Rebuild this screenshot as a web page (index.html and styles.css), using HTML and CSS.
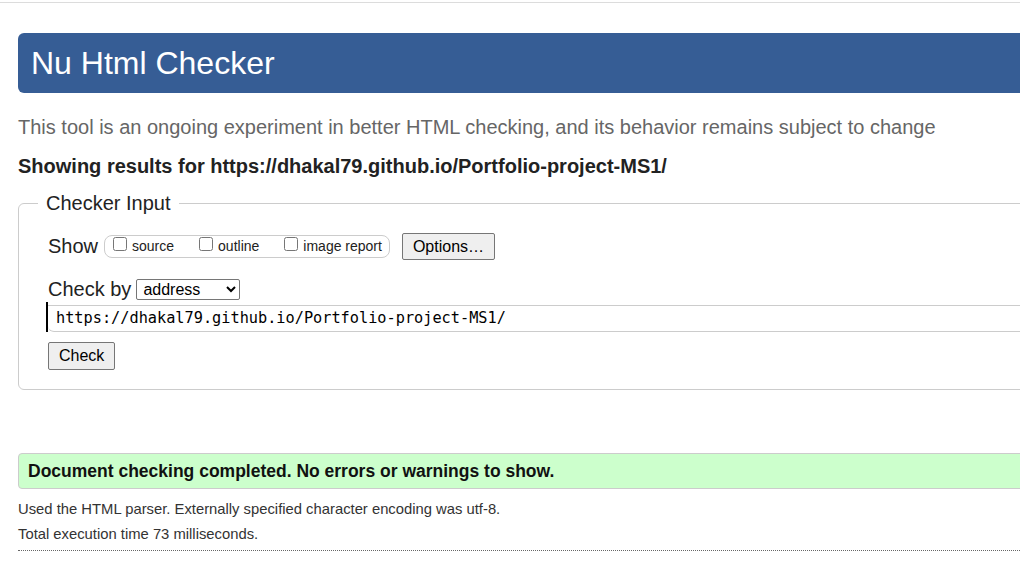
FILE: index.html
```html
<!DOCTYPE html>
<html lang="en">
<head>
<meta charset="utf-8">
<title>Nu Html Checker</title>
<link rel="stylesheet" href="styles.css">
</head>
<body>
<div class="topline"></div>
<main class="page">
  <h1 class="title">Nu Html Checker</h1>
  <p class="subtitle">This tool is an ongoing experiment in better HTML checking, and its behavior remains subject to change</p>
  <p class="results-for">Showing results for https://dhakal79.github.io/Portfolio-project-MS1/</p>
  <fieldset class="checker">
    <legend class="legend">Checker Input</legend>
    <div class="row show-row">
      <span class="row-label">Show</span>
      <span class="opts">
        <label class="opt"><input type="checkbox" class="cb"><span>source</span></label>
        <label class="opt"><input type="checkbox" class="cb"><span>outline</span></label>
        <label class="opt"><input type="checkbox" class="cb"><span>image report</span></label>
      </span>
      <button class="btn options-btn" type="button">Options…</button>
    </div>
    <div class="row checkby-row">
      <span class="row-label">Check by</span>
      <select class="select"><option>address</option></select>
    </div>
    <div class="addr-wrap">
      <div class="addr">https://dhakal79.github.io/Portfolio-project-MS1/</div>
    </div>
    <button class="btn check-btn" type="button">Check</button>
  </fieldset>
  <div class="success">Document checking completed. No errors or warnings to show.</div>
  <p class="note">Used the HTML parser. Externally specified character encoding was utf-8.</p>
  <p class="note">Total execution time 73 milliseconds.</p>
  <div class="dotted"></div>
</main>
</body>
</html>
```

FILE: styles.css
```css
html, body {
  margin: 0;
  padding: 0;
  overflow: hidden;
  background: #fff;
}
body {
  font-family: "Liberation Sans", Arial, sans-serif;
  color: #222;
  padding-top: 2px;
}
.topline {
  border-top: 1px solid #dcdcdc;
}
.page {
  margin-left: 18px;
  width: 1100px;
}
.title {
  margin: 30px 0 0;
  height: 60px;
  line-height: 60px;
  background: #365d95;
  color: #fff;
  font-weight: normal;
  font-size: 32px;
  padding-left: 13px;
  border-radius: 6px 0 0 6px;
}
.subtitle {
  margin: 22px 0 0;
  font-size: 20px;
  line-height: 24px;
  color: #666;
}
.results-for {
  margin: 15px 0 0;
  font-size: 20px;
  line-height: 24px;
  font-weight: bold;
  color: #222;
}
.checker {
  margin: 13px 0 0;
  border: 1px solid #ccc;
  border-radius: 6px;
  padding: 0 0 19px 29px;
  min-width: 0;
}
.legend {
  font-size: 20px;
  line-height: 24px;
  padding: 0 8px;
  margin-left: -10px;
  color: #222;
}
.row {
  display: flex;
  align-items: center;
}
.show-row {
  margin-top: 17px;
  height: 28px;
}
.row-label {
  font-size: 20px;
  line-height: 24px;
  margin-right: 6px;
}
.opts {
  display: flex;
  align-items: center;
  border: 1px solid #ccc;
  border-radius: 8px;
  height: 21px;
  padding: 0 7px 0 8px;
  gap: 25px;
  font-size: 14px;
}
.opt {
  display: flex;
  align-items: center;
}
.cb {
  margin: 0 5px 0 0;
  width: 14px;
  height: 14px;
  position: relative;
  top: -2px;
}
.btn {
  font-family: "Liberation Sans", Arial, sans-serif;
  font-size: 16px;
  line-height: 19px;
  color: #000;
  background: #efefef;
  border: 1px solid #767676;
  border-radius: 2px;
  padding: 3px 10px;
}
.options-btn {
  margin-left: 12px;
}
.checkby-row {
  margin-top: 17px;
  height: 24px;
}
.row-label + .select {
  margin-left: -1px;
}
.select {
  font-family: "Liberation Sans", Arial, sans-serif;
  font-size: 16px;
  height: 21px;
  width: 104px;
  border: 1px solid #767676;
  border-radius: 2px;
  background: #fff;
  color: #000;
  padding: 0 0 0 2px;
  margin-top: 1px;
}
.addr-wrap {
  margin-top: 1px;
  margin-left: -2px;
  border-left: 2px solid #000;
  height: 30px;
  padding-top: 3px;
  box-sizing: border-box;
}
.addr {
  height: 27px;
  box-sizing: border-box;
  border: 1px solid #ccc;
  border-left: none;
  border-radius: 0 6px 6px 6px;
  font-family: "DejaVu Sans Mono", "Liberation Mono", monospace;
  font-size: 15.25px;
  line-height: 24px;
  padding-left: 8px;
  color: #000;
}
.check-btn {
  margin-top: 10px;
  display: block;
  padding-bottom: 4px;
}
.success {
  margin-top: 63px;
  height: 36px;
  box-sizing: border-box;
  background: #ccffcc;
  border: 1px solid #ccc;
  border-radius: 4px 0 0 4px;
  font-weight: bold;
  font-size: 17.5px;
  line-height: 34px;
  padding-left: 9px;
  color: #111;
}
.note {
  margin: 0;
  font-size: 14.8px;
  line-height: 25px;
  color: #333;
}
.success + .note {
  margin-top: 8px;
}
.dotted {
  margin-top: 3px;
  border-top: 1px dotted #666;
}
```
